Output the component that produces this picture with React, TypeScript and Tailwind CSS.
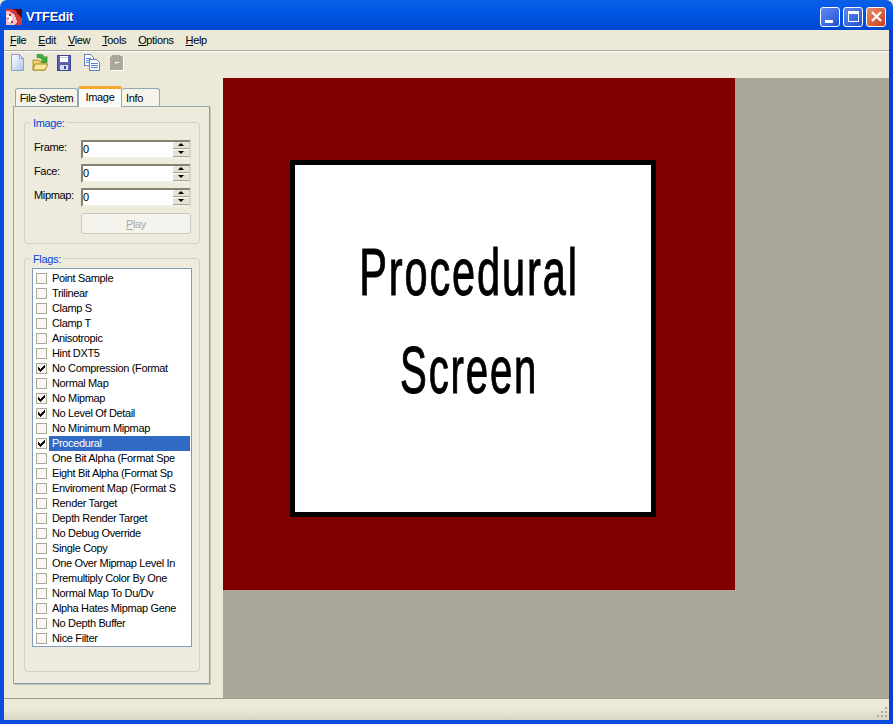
const flags: [string, boolean][] = [
  ['Point Sample', false],
  ['Trilinear', false],
  ['Clamp S', false],
  ['Clamp T', false],
  ['Anisotropic', false],
  ['Hint DXT5', false],
  ['No Compression (Format', true],
  ['Normal Map', false],
  ['No Mipmap', true],
  ['No Level Of Detail', true],
  ['No Minimum Mipmap', false],
  ['Procedural', true],
  ['One Bit Alpha (Format Spe', false],
  ['Eight Bit Alpha (Format Sp', false],
  ['Enviroment Map (Format S', false],
  ['Render Target', false],
  ['Depth Render Target', false],
  ['No Debug Override', false],
  ['Single Copy', false],
  ['One Over Mipmap Level In', false],
  ['Premultiply Color By One', false],
  ['Normal Map To Du/Dv', false],
  ['Alpha Hates Mipmap Gene', false],
  ['No Depth Buffer', false],
  ['Nice Filter', false],
];

const menus = [
  ['F', 'ile'],
  ['E', 'dit'],
  ['V', 'iew'],
  ['T', 'ools'],
  ['O', 'ptions'],
  ['H', 'elp'],
];

function AppIcon() {
  return (
    <svg width="16" height="16" viewBox="0 0 16 16" shapeRendering="crispEdges" className="shrink-0">
      <rect width="16" height="16" fill="#7a0c0c" />
      <path d="M0 0h6l4 2 3 5 3 2v7H0z" fill="#d43a3a" />
      <path d="M0 2h3l5 3 2 4 1 4-3 3H0z" fill="#f6c4c8" />
      <path d="M1 6h3l2 3-1 4H2z" fill="#ffffff" />
      <path d="M3 5h2v2H3zM1 9h2v1H1zM5 12h2v2H5z" fill="#b03050" />
      <path d="M10 0h6v7l-3-1-2-3z" fill="#5a0808" />
    </svg>
  );
}

function NewIcon() {
  return (
    <svg width="15" height="17" viewBox="0 0 15 17">
      <defs>
        <linearGradient id="newg" x1="0" y1="0" x2="1" y2="1">
          <stop offset="0" stopColor="#ffffff" />
          <stop offset="1" stopColor="#a9c4ec" />
        </linearGradient>
      </defs>
      <path d="M1.5 0.5h8l4 4v12h-12z" fill="url(#newg)" stroke="#8f9fc8" />
      <path d="M9.5 0.5v4h4z" fill="#d9e6f7" stroke="#8f9fc8" />
    </svg>
  );
}

function OpenIcon() {
  return (
    <svg width="17" height="17" viewBox="0 0 17 17">
      <path d="M1 6h5l1 1h6v9H1z" fill="#f3d36b" stroke="#a58a2a" />
      <path d="M1 16l2-6h13l-3 6z" fill="#fbe79a" stroke="#a58a2a" />
      <path d="M5 0.5c4-1 6 0 8 3l2-1v6H9l2-2C9 4.5 8 3.5 5 3.5z" fill="#3fae3a" stroke="#1f7a25" strokeWidth="0.6" />
    </svg>
  );
}

function SaveIcon() {
  return (
    <svg width="14" height="16" viewBox="0 0 14 16" shapeRendering="crispEdges">
      <rect x="0.5" y="0.5" width="13" height="15" fill="#5a64b4" stroke="#3c4494" />
      <rect x="3" y="1" width="8" height="6" fill="#ffffff" />
      <rect x="3" y="2" width="8" height="1" fill="#c9cfe8" />
      <rect x="3" y="10" width="8" height="5" fill="#d8dbec" />
      <rect x="7" y="11" width="2" height="3" fill="#3c4494" />
    </svg>
  );
}

function CopyIcon() {
  return (
    <svg width="16" height="17" viewBox="0 0 16 17" shapeRendering="crispEdges">
      <path d="M0.5 0.5h6l3 3v8h-9z" fill="#ffffff" stroke="#6b7fbd" />
      <path d="M2 4h5M2 6h5M2 8h5" stroke="#4d8ad6" />
      <path d="M5.5 5.5h7l3 3v8h-10z" fill="#ffffff" stroke="#6b7fbd" />
      <path d="M7 9h7M7 11h7M7 13h7" stroke="#4d8ad6" />
    </svg>
  );
}

function PasteIcon() {
  return (
    <svg width="15" height="16" viewBox="0 0 15 16" shapeRendering="crispEdges">
      <path d="M3 0h8v1h2v1h1v13H1V2h1V1h1z" fill="#aca899" />
      <path d="M6 7h4v1H7v1H6z" fill="#ffffff" />
      <path d="M14 3h1v13H2v-1h12z" fill="#ffffff" />
    </svg>
  );
}

function Spin({ label }: { label: string }) {
  return (
    <div className="flex items-start h-[24px]">
      <span className="w-[47px] -mt-[1px]">{label}</span>
      <div className="w-[110px] h-[19px] flex bg-white border-2 border-[#858272] border-r-[#d8d4c4] border-b-[#f1efe2]">
        <span className="flex-1 leading-[15px]">0</span>
        <div className="w-[16px] flex flex-col gap-[1px] bg-white">
          <div className="h-[7px] bg-[#e6e3d4] border-b border-[#a8a592] flex items-center justify-center">
            <div className="w-0 h-0 border-x-[3px] border-x-transparent border-b-[3px] border-b-black" />
          </div>
          <div className="h-[8px] bg-[#e6e3d4] border-b border-[#a8a592] flex items-center justify-center">
            <div className="w-0 h-0 border-x-[3px] border-x-transparent border-t-[3px] border-t-black" />
          </div>
        </div>
      </div>
    </div>
  );
}

function FlagRow({ name, checked }: { name: string; checked: boolean }) {
  const selected = name === 'Procedural';
  return (
    <div className="h-[15px] flex items-center pl-[3px]">
      <div className="w-[11px] h-[11px] shrink-0 border border-[#aca899] bg-[#f8f7f3] flex items-center justify-center">
        {checked && (
          <svg width="9" height="9" viewBox="0 0 9 9" shapeRendering="crispEdges">
            <path d="M1 3h1v1h1v1h1V4h1V3h1V2h1V1h1v3H7v1H6v1H5v1H4v1H3V7H2V6H1z" fill="#111111" />
          </svg>
        )}
      </div>
      <div
        className={
          selected
            ? 'ml-[2px] w-[141px] h-[15px] pl-[3px] leading-[15px] bg-[#316ac5] text-white'
            : 'ml-[2px] pl-[3px] leading-[15px] whitespace-nowrap'
        }
      >
        {name}
      </div>
    </div>
  );
}

export default function App() {
  return (
    <div className="w-[893px] h-[724px] overflow-hidden flex flex-col bg-[#ece9d8] text-[11px] tracking-[-0.35px] text-black font-['Liberation_Sans',sans-serif]">
      {/* title bar */}
      <div className="h-[30px] shrink-0 flex items-center pl-[6px] pr-[7px] pt-[3px] rounded-t-[7px] bg-gradient-to-b from-[#0a5fe8] via-[#0054e3] to-[#0048d0]">
        <AppIcon />
        <span className="ml-[4px] text-white font-bold text-[13px] tracking-[-0.3px] [text-shadow:1px_1px_#0f1089]">VTFEdit</span>
        <div className="ml-auto flex gap-[3px]">
          <div className="w-[20px] h-[20px] rounded-[3px] border border-white bg-gradient-to-br from-[#5f8af0] to-[#2450d8] flex items-end pl-[4px] pb-[3px]">
            <div className="w-[8px] h-[3px] bg-white" />
          </div>
          <div className="w-[20px] h-[20px] rounded-[3px] border border-white bg-gradient-to-br from-[#5f8af0] to-[#2450d8] flex items-center justify-center">
            <div className="w-[11px] h-[11px] border border-white border-t-[3px]" />
          </div>
          <div className="w-[20px] h-[20px] rounded-[3px] border border-white bg-gradient-to-br from-[#ea8a6a] to-[#c83a14] flex items-center justify-center">
            <svg width="13" height="13" viewBox="0 0 13 13">
              <path d="M2 2l9 9M11 2l-9 9" stroke="#ffffff" strokeWidth="2.4" />
            </svg>
          </div>
        </div>
      </div>

      <div className="flex-1 flex flex-col border-x-[4px] border-b-[4px] border-l-[#0a4be0] border-r-[#0a3fd0] border-b-[#0a4be0] min-h-0">
        {/* menu */}
        <div className="h-[20px] shrink-0 flex items-center pl-[6px] gap-[12px]">
          {menus.map(([key, rest]) => (
            <span key={key}>
              <span className="underline">{key}</span>
              {rest}
            </span>
          ))}
        </div>
        <div className="h-[2px] shrink-0 border-t border-[#aca899] border-b border-b-white" />

        {/* toolbar */}
        <div className="h-[26px] shrink-0 flex items-center pl-[6px] pb-[5px]">
          <NewIcon />
          <div className="ml-[7px]"><OpenIcon /></div>
          <div className="ml-[8px]"><SaveIcon /></div>
          <div className="ml-[13px]"><CopyIcon /></div>
          <div className="ml-[9px]"><PasteIcon /></div>
        </div>

        <div className="flex-1 flex min-h-0">
          {/* left panel */}
          <div className="w-[219px] shrink-0 pl-[9px] pt-[7px]">
            <div className="flex items-end h-[21px] pl-[2px]">
              <div className="w-[63px] h-[18px] bg-[#f5f3ea] border border-b-0 border-[#91a7b4] rounded-t-[3px] text-center leading-[19px]">File System</div>
              <div className="relative z-10 w-[44px] h-[21px] -mb-[1px] bg-[#fcfcfa] border-x border-[#91a7b4] border-t-[3px] border-t-[#f7a92f] rounded-t-[3px] text-center leading-[16px]">Image</div>
              <div className="w-[38px] h-[18px] bg-[#f5f3ea] border border-b-0 border-l-0 border-[#91a7b4] rounded-t-[3px] pl-[4px] leading-[19px]">Info</div>
            </div>
            <div className="w-[197px] h-[578px] bg-[#eeebdd] border border-[#91a7b4] border-r-[#7f9db9] border-b-[#7f9db9] pl-[10px] pt-[15px] shadow-[1px_1px_0_#c9c6b4]">
              {/* Image group */}
              <div className="relative w-[176px] h-[122px] border border-[#d0d0bf] rounded-[4px] pl-[9px] pt-[17px]">
                <span className="absolute -top-[8px] left-[6px] bg-[#eeebdd] px-[2px] text-[#0046d5]">Image:</span>
                <Spin label="Frame:" />
                <Spin label="Face:" />
                <Spin label="Mipmap:" />
                <div className="ml-[47px] mt-[1px] w-[110px] h-[21px] border border-[#c9c7ba] rounded-[3px] bg-[#f4f3ee] text-center leading-[20px] text-[#aca899]">
                  <span className="underline">P</span>lay
                </div>
              </div>
              {/* Flags group */}
              <div className="relative mt-[14px] w-[176px] h-[414px] border border-[#d0d0bf] rounded-[4px] pl-[7px] pt-[9px]">
                <span className="absolute -top-[8px] left-[6px] bg-[#eeebdd] px-[2px] text-[#0046d5]">Flags:</span>
                <div className="w-[160px] h-[379px] bg-white border border-[#7f9db9] pt-[2px] overflow-hidden">
                  {flags.map(([name, checked]) => (
                    <FlagRow key={name} name={name} checked={checked} />
                  ))}
                </div>
              </div>
            </div>
          </div>

          {/* canvas */}
          <div className="flex-1 bg-[#aca899]">
            <div className="w-[512px] h-[512px] bg-[#800000] pl-[67px] pt-[82px]">
              <div className="w-[366px] h-[357px] bg-white border-[5px] border-black flex flex-col items-center pr-[8px]">
                <div className="mt-[69px] text-[67px] leading-[76px] scale-x-[0.62] tracking-[3px] whitespace-nowrap [-webkit-text-stroke:1px_black]">Procedural</div>
                <div className="mt-[22px] text-[67px] leading-[76px] scale-x-[0.6] tracking-[3px] whitespace-nowrap [-webkit-text-stroke:1px_black]">Screen</div>
              </div>
            </div>
          </div>
        </div>

        {/* status bar */}
        <div className="h-[22px] shrink-0 border-t border-[#9d9a8a] bg-gradient-to-b from-[#ece9d8] via-[#ece9d8] to-[#d8d5c4] flex justify-end items-end pr-[1px] pb-[2px]">
          <svg width="11" height="11" viewBox="0 0 11 11" shapeRendering="crispEdges">
            <path d="M8 0h2v2H8zM4 4h2v2H4zM8 4h2v2H8zM0 8h2v2H0zM4 8h2v2H4zM8 8h2v2H8z" fill="#aca899" />
          </svg>
        </div>
      </div>
    </div>
  );
}
